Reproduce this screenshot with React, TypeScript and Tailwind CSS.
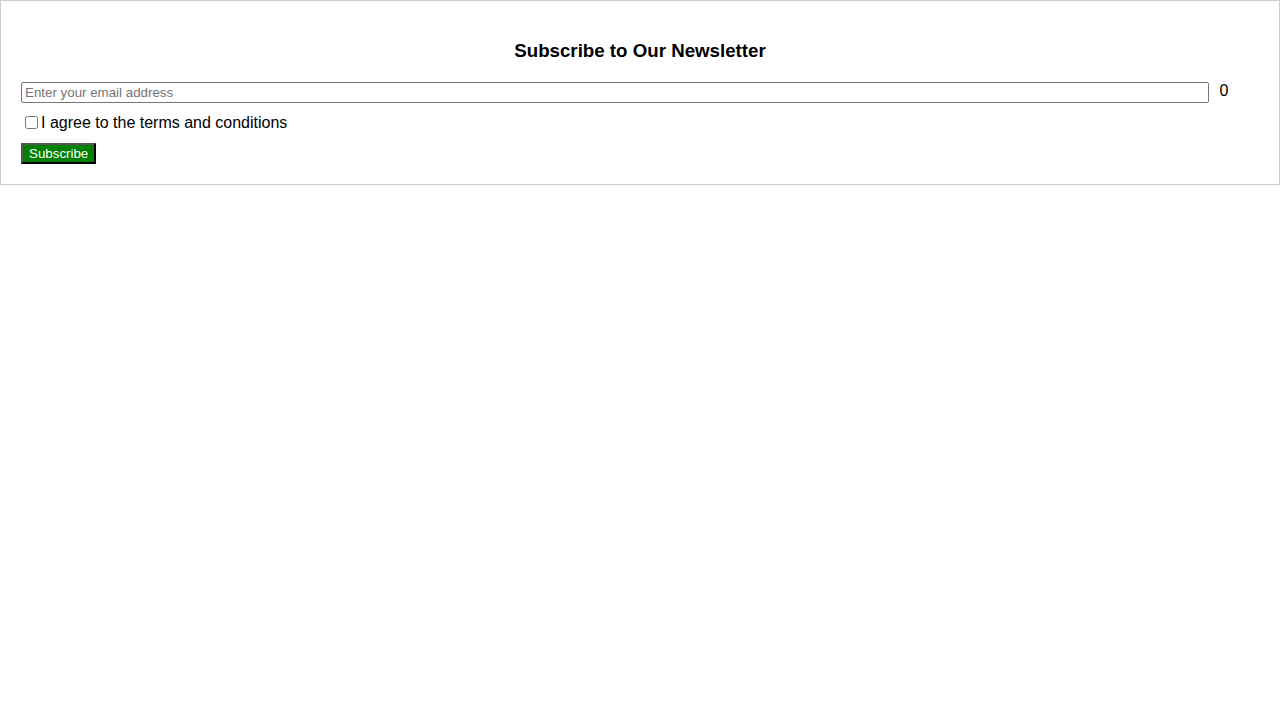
export default function App() {
    return (
        <div className="border border-[#cccccc] p-5 font-['Liberation_Sans',Arial,sans-serif] text-black">
            <h3 className="mt-[18.72px] mb-[20.72px] text-center text-[18.72px] font-bold leading-[21.5px]">
                Subscribe to Our Newsletter
            </h3>
            <div className="flex items-start">
                <input
                    type="email"
                    placeholder="Enter your email address"
                    className="h-[21px] w-[96%] rounded-[2px] border border-[#767676] px-[3px] py-px text-[13.33px] placeholder:text-[#757575]"
                />
                <span className="ml-2.5 text-base leading-[18.4px]">0</span>
            </div>
            <label className="mt-2.5 flex h-5 items-center text-base leading-[18.4px]">
                <input type="checkbox" className="my-[3px] ml-1 mr-[3px] h-[13px] w-[13px]" />
                I agree to the terms and conditions
            </label>
            <button className="mt-2.5 block h-[21px] border-2 border-t-[#555555] border-l-[#555555] border-b-black border-r-black bg-[#008000] px-1.5 py-px text-[13.33px] leading-[15px] text-white">
                Subscribe
            </button>
        </div>
    );
}
